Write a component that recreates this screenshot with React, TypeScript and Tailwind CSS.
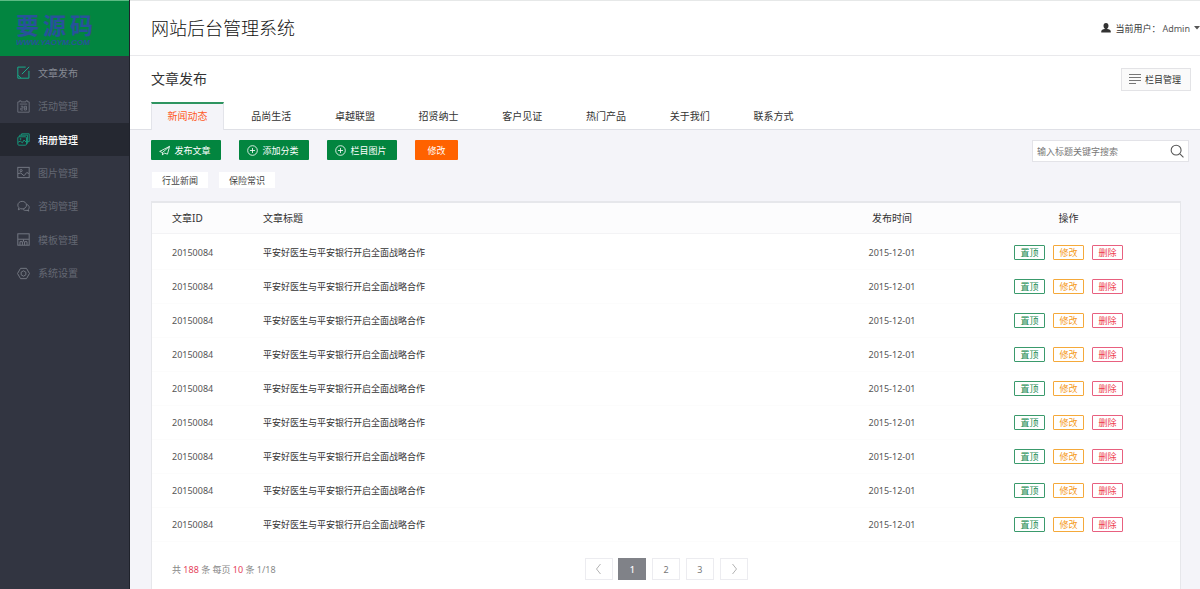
import type { ReactNode } from 'react';
import clsx from 'clsx';

type IconProps = { children: ReactNode; className?: string };

function Icon({ children, className }: IconProps) {
    return (
        <svg
            viewBox="0 0 24 24"
            fill="none"
            stroke="currentColor"
            strokeWidth="1.8"
            aria-hidden="true"
            className={clsx('shrink-0', className)}
        >
            {children}
        </svg>
    );
}

const menu = [
    {
        label: '文章发布',
        tone: 'text-[#858993]',
        iconTone: 'text-[#17b08c]',
        icon: <path d="M16 2H1.500v20.500H22V9M22.500 1.500 9 15M2 17l5.500 5.500" />,
    },
    {
        label: '活动管理',
        tone: 'text-[#646873]',
        iconTone: 'text-[#6a6e79]',
        icon: (
            <path d="M1.500 3.500h3v-2h3v2h9v-2h3v2h3v19h-21zM5 7.500h14M7 11.500h4v3.500H7v3.500h4M13.500 11.500h4v7h-4zM13.500 15h4" />
        ),
    },
    {
        label: '相册管理',
        tone: 'text-white font-medium',
        iconTone: 'text-[#17957a]',
        active: true,
        icon: (
            <>
                <rect x="1.500" y="7" width="16" height="15.500" rx="2" />
                <path d="M5 7V4h14.500v15h-2M8.500 4V1.500h14v14.500h-3M2 17l4-2 4 3 3-5 4 4" />
                <circle cx="6.500" cy="11" r="1" />
            </>
        ),
    },
    {
        label: '图片管理',
        tone: 'text-[#646873]',
        iconTone: 'text-[#747883]',
        icon: (
            <>
                <rect x="1.500" y="2.500" width="21" height="19" />
                <circle cx="7.500" cy="8.500" r="2" />
                <path d="m2 14 5-1 6 5 5-6 4 2" />
            </>
        ),
    },
    {
        label: '咨询管理',
        tone: 'text-[#646873]',
        iconTone: 'text-[#747883]',
        icon: (
            <>
                <path d="M9.500 2.500c4.500 0 8 3 8 7s-3.500 7-8 7c-1 0-2-.2-3-.5L2.500 18l1-4C2.200 12.800 1.500 11.200 1.500 9.500c0-4 3.500-7 8-7z" />
                <path d="M18.500 8.500c2.500.8 4 2.800 4 5 0 1.500-.6 2.800-1.600 3.800l.8 3.200-3.200-1.500c-3 .8-6 0-7.500-2" />
            </>
        ),
    },
    {
        label: '模板管理',
        tone: 'text-[#646873]',
        iconTone: 'text-[#747883]',
        icon: (
            <>
                <rect x="1.500" y="1.500" width="21" height="21" />
                <path d="M2 11.500h20M5.500 22v-6h4.500v6M14 22v-6h4.500v6M12 12v4" />
            </>
        ),
    },
    {
        label: '系统设置',
        tone: 'text-[#646873]',
        iconTone: 'text-[#747883]',
        icon: (
            <>
                <path d="M6.500 2.500h11L23 12l-5.500 9.500h-11L1 12z" />
                <path d="m12 7 4.300 2.500v5L12 17l-4.300-2.500v-5z" />
            </>
        ),
    },
];

const tabs = ['新闻动态', '品尚生活', '卓越联盟', '招贤纳士', '客户见证', '热门产品', '关于我们', '联系方式'];

const plusCircle = (
    <>
        <circle cx="12" cy="12" r="10.500" />
        <path d="M12 6.500v11M6.500 12h11" />
    </>
);

const toolbar = [
    { label: '发布文章', icon: <path d="M23 3 1.500 14l6 2.500L23 3l-4.500 17-7-2.500M7.500 16.500V22l4-4.500" /> },
    { label: '添加分类', icon: plusCircle },
    { label: '栏目图片', icon: plusCircle },
];

const articles = Array.from({ length: 9 }, (_, i) => ({
    key: i,
    id: '20150084',
    title: '平安好医生与平安银行开启全面战略合作',
    date: '2015-12-01',
}));

const actions = [
    { label: '置顶', tone: 'border-[#3a9a6c] text-[#168a50]' },
    { label: '修改', tone: 'border-[#f5a93a] text-[#f59a23]' },
    { label: '删除', tone: 'border-[#e8607f] text-[#ee3d4c]' },
];

function Sidebar() {
    return (
        <aside className="w-[130px] shrink-0 border-r border-[#1f222b] bg-[#323541]">
            <a
                href="#"
                className="flex h-14 flex-col items-start border-t border-[#5cba84] bg-[#028540] pt-[11px] pl-4 text-[#28529a]"
            >
                <span className="flex gap-1 text-[23px] leading-[27px] font-bold">
                    <span>要</span>
                    <span>源</span>
                    <span>码</span>
                </span>
                <span className="font-['Liberation_Sans',sans-serif] text-[8px] leading-[8px] font-bold italic">
                    WWW.YAOYM.COM
                </span>
            </a>
            <nav className="grid h-[234px] grid-rows-7">
                {menu.map((item) => (
                    <a
                        key={item.label}
                        href="#"
                        className={clsx(
                            'flex items-center gap-2 pl-[17px] text-[10px]',
                            item.tone,
                            item.active && 'bg-[#252831]',
                        )}
                    >
                        <Icon className={clsx('size-[13px]', item.iconTone)}>{item.icon}</Icon>
                        {item.label}
                    </a>
                ))}
            </nav>
        </aside>
    );
}

function Header() {
    return (
        <header className="flex h-14 items-center justify-between border-t border-b border-t-[#e6e8e8] border-b-[#e9e9ec] bg-white pl-[21px]">
            <h1 className="text-lg font-light text-[#111]">网站后台管理系统</h1>
            <div className="flex items-center text-[9px] text-[#333]">
                <svg viewBox="0 0 20 20" fill="currentColor" className="mr-1 size-2.5" aria-hidden="true">
                    <path d="M10 0c3.300 0 5 2.400 5 5.500 0 2.400-1 4.500-2.500 5.600v.7c4 .7 7 2 7 4.700V19H.5v-2.500c0-2.700 3-4 7-4.700v-.7C6 10 5 7.900 5 5.500 5 2.400 6.700 0 10 0z" />
                </svg>
                <span>当前用户：</span>
                <button type="button" className="ml-0.5 flex items-center gap-1 text-[#555]">
                    Admin
                    <svg viewBox="0 0 6 4" fill="currentColor" className="h-1 w-1.5" aria-hidden="true">
                        <path d="M0 0h6L3 3.500z" />
                    </svg>
                </button>
            </div>
        </header>
    );
}

function ArticleTable() {
    return (
        <table className="w-full table-fixed text-left text-[9px] text-[#444]">
            <thead className="border-b border-[#f3f3f5] bg-[#fcfcfd] text-[10px] text-[#333]">
                <tr className="h-[30px]">
                    <th className="w-[111px] pl-5 font-normal">文章ID</th>
                    <th className="font-normal">文章标题</th>
                    <th className="w-[130px] text-center font-normal">发布时间</th>
                    <th className="w-[223px] text-center font-normal">操作</th>
                </tr>
            </thead>
            <tbody className="before:block before:h-0.5">
                {articles.map((article) => (
                    <tr key={article.key} className="h-[34px] border-b border-[#fcfcfc]">
                        <td className="pl-5 text-[#555]">{article.id}</td>
                        <td className="text-[#333]">{article.title}</td>
                        <td className="text-center text-[#555]">{article.date}</td>
                        <td>
                            <div className="flex justify-center gap-2">
                                {actions.map((action) => (
                                    <button
                                        key={action.label}
                                        type="button"
                                        className={clsx(
                                            'flex h-[15px] w-[31px] items-center justify-center rounded-[1px] border',
                                            action.tone,
                                        )}
                                    >
                                        {action.label}
                                    </button>
                                ))}
                            </div>
                        </td>
                    </tr>
                ))}
            </tbody>
        </table>
    );
}

function Pagination() {
    const cell = 'flex h-[22px] w-7 items-center justify-center border';
    const idle = 'border-[#ececf0] text-[#777]';

    return (
        <nav aria-label="分页" className="flex w-[163px] justify-between text-[9px]">
            <button type="button" aria-label="上一页" className={clsx(cell, idle)}>
                <Icon className="size-3 text-[#aaa]">
                    <path d="m15 2-8 10 8 10" />
                </Icon>
            </button>
            <button type="button" className={clsx(cell, 'border-[#808288] bg-[#808288] font-medium text-white')}>
                1
            </button>
            <button type="button" className={clsx(cell, idle)}>2</button>
            <button type="button" className={clsx(cell, idle)}>3</button>
            <button type="button" aria-label="下一页" className={clsx(cell, idle)}>
                <Icon className="size-3 text-[#aaa]">
                    <path d="m9 2 8 10-8 10" />
                </Icon>
            </button>
        </nav>
    );
}

export default function App() {
    return (
        <div className="flex min-h-screen bg-[#f4f4f9] font-['Noto_Sans','Noto_Sans_CJK_SC',sans-serif] leading-none">
            <Sidebar />
            <div className="flex min-w-0 flex-1 flex-col">
                <Header />

                {/* Page title and tabs */}
                <section className="border-b border-[#dfe0e6] bg-white pl-[21px]">
                    <div className="flex h-[46px] items-center justify-between pr-[9px]">
                        <h2 className="text-sm text-[#333]">文章发布</h2>
                        <button
                            type="button"
                            className="flex h-[23px] w-[70px] items-center justify-center gap-1 border border-[#e3e3e6] bg-[#fafafa] pr-0.5 text-[9px] text-[#333]"
                        >
                            <Icon className="size-3 text-[#666]">
                                <path d="M0 3h24M0 9h24M0 15h24M0 21h14" />
                            </Icon>
                            栏目管理
                        </button>
                    </div>
                    <div role="tablist" className="-mb-px flex w-[659px] justify-between text-[10px]">
                        {tabs.map((tab, i) => (
                            <button
                                key={tab}
                                type="button"
                                role="tab"
                                aria-selected={i === 0}
                                className={clsx(
                                    'h-7 w-[73px] border-t-2 pb-0.5',
                                    i === 0
                                        ? 'border-x border-x-[#e3e4ea] border-t-[#2e9460] bg-[#f4f4f9] text-[#ff5a1f]'
                                        : 'border-transparent text-[#333]',
                                )}
                            >
                                {tab}
                            </button>
                        ))}
                    </div>
                </section>

                {/* Toolbar */}
                <div className="flex items-start justify-between pt-2.5 pr-[11px] pl-[21px]">
                    <div className="flex gap-[18px] text-[9px] text-white">
                        {toolbar.map((item) => (
                            <button
                                key={item.label}
                                type="button"
                                className="flex h-5 w-[70px] items-center justify-center gap-1 rounded-[1px] bg-[#02853f] pr-0.5"
                            >
                                <Icon className="size-[11px]">{item.icon}</Icon>
                                {item.label}
                            </button>
                        ))}
                        <button type="button" className="h-5 w-[43px] rounded-[1px] bg-[#ff6200]">修改</button>
                    </div>
                    <form className="flex h-[22px] w-[157px] items-center border border-[#e3e3e8] bg-white px-1">
                        <input
                            type="text"
                            aria-label="搜索文章"
                            placeholder="输入标题关键字搜索"
                            className="min-w-0 flex-1 text-[9px] outline-none placeholder:text-[#777]"
                        />
                        <button type="button" aria-label="搜索">
                            <Icon className="size-3.5 text-[#555]">
                                <circle cx="10.500" cy="10.500" r="8.500" />
                                <path d="m17 17 6 6" />
                            </Icon>
                        </button>
                    </form>
                </div>

                {/* Sub categories */}
                <div className="mt-2.5 flex gap-[11px] pl-[22px] text-[9px] text-[#444]">
                    <button type="button" className="h-4 w-14 bg-white">行业新闻</button>
                    <button type="button" className="h-4 w-14 bg-white">保险常识</button>
                </div>

                <main className="mt-[13px] mr-[19px] ml-[21px] flex-1 border border-t-2 border-b-0 border-[#e6e7eb] bg-white">
                    <ArticleTable />
                    <div className="mt-4 grid grid-cols-[1fr_auto_1fr] items-center px-5 pb-2">
                        <p className="text-[9px] text-[#888]">
                            共 <span className="text-[#e5435c]">188</span> 条 每页{' '}
                            <span className="text-[#e5435c]">10</span> 条 1/18
                        </p>
                        <Pagination />
                    </div>
                </main>
            </div>
        </div>
    );
}
